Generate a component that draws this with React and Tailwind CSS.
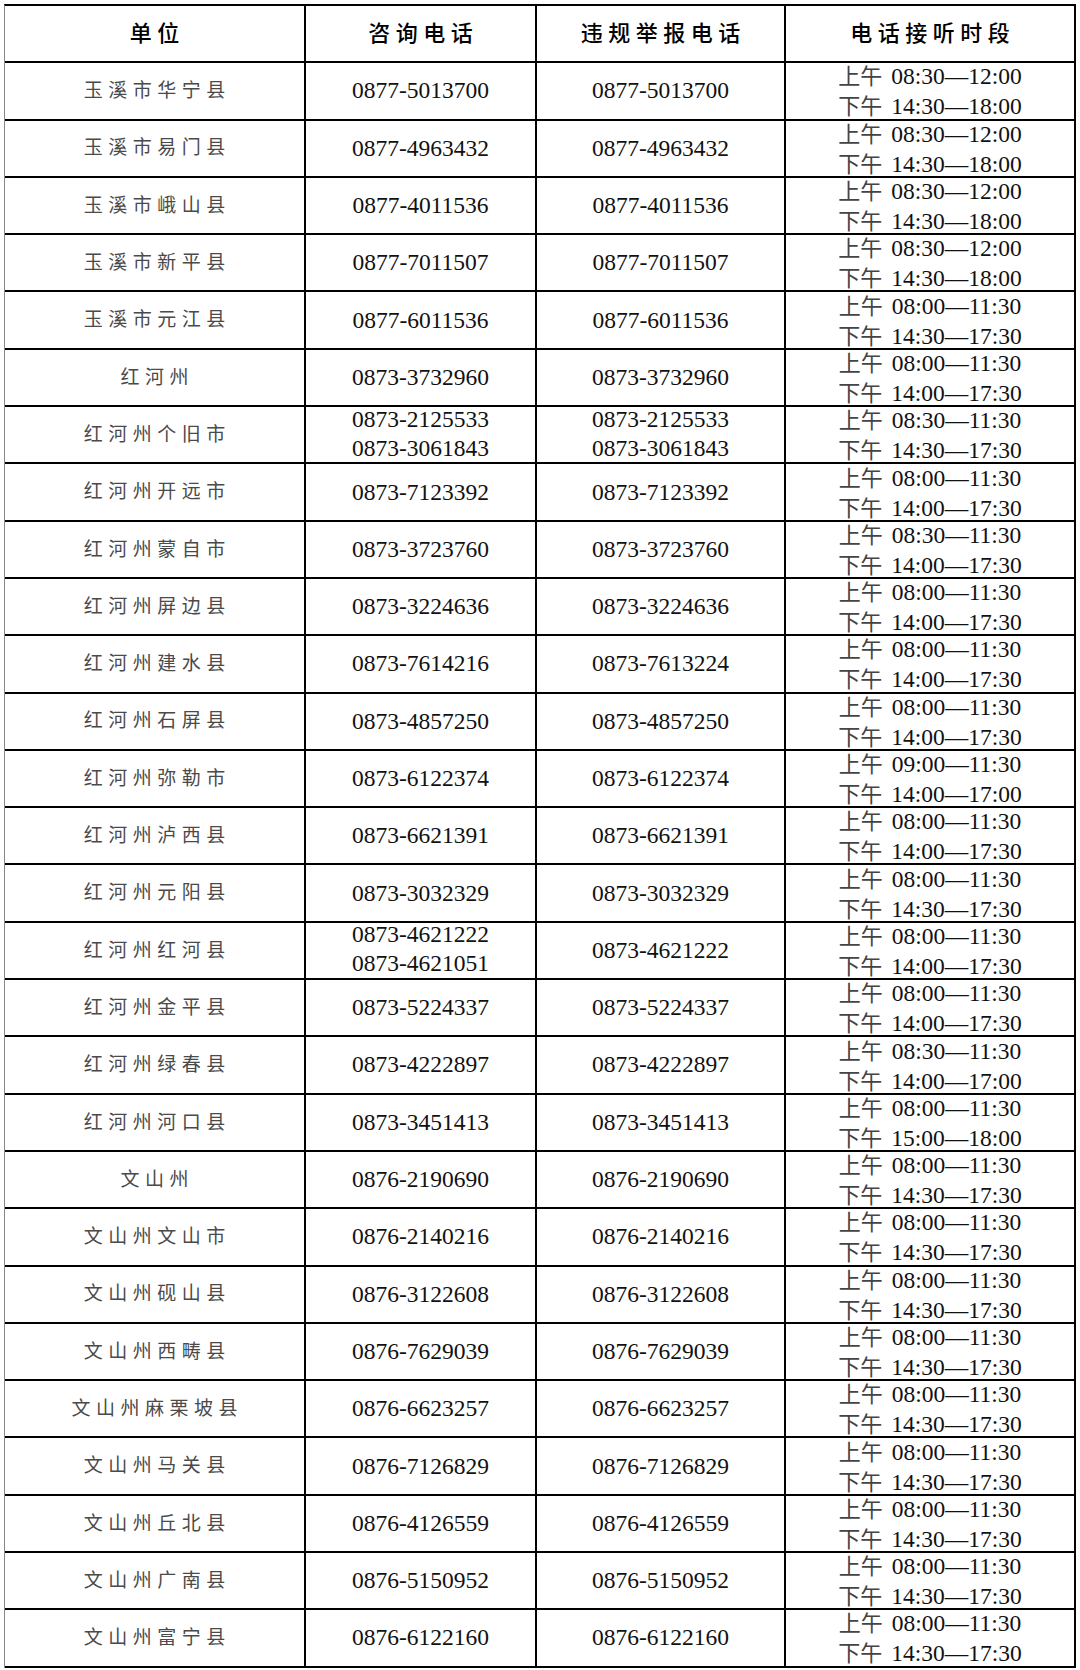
import React from "react";

const cjk = '"Noto Sans CJK SC", sans-serif';
const serif = '"Liberation Serif", "Noto Sans CJK SC", serif';

const wsTimes = ["08:00—11:30", "14:30—17:30"];

const rows = [
  ["玉溪市华宁县", ["0877-5013700"], ["0877-5013700"], ["08:30—12:00", "14:30—18:00"]],
  ["玉溪市易门县", ["0877-4963432"], ["0877-4963432"], ["08:30—12:00", "14:30—18:00"]],
  ["玉溪市峨山县", ["0877-4011536"], ["0877-4011536"], ["08:30—12:00", "14:30—18:00"]],
  ["玉溪市新平县", ["0877-7011507"], ["0877-7011507"], ["08:30—12:00", "14:30—18:00"]],
  ["玉溪市元江县", ["0877-6011536"], ["0877-6011536"], ["08:00—11:30", "14:30—17:30"]],
  ["红河州", ["0873-3732960"], ["0873-3732960"], ["08:00—11:30", "14:00—17:30"]],
  ["红河州个旧市", ["0873-2125533", "0873-3061843"], ["0873-2125533", "0873-3061843"], ["08:30—11:30", "14:30—17:30"]],
  ["红河州开远市", ["0873-7123392"], ["0873-7123392"], ["08:00—11:30", "14:00—17:30"]],
  ["红河州蒙自市", ["0873-3723760"], ["0873-3723760"], ["08:30—11:30", "14:00—17:30"]],
  ["红河州屏边县", ["0873-3224636"], ["0873-3224636"], ["08:00—11:30", "14:00—17:30"]],
  ["红河州建水县", ["0873-7614216"], ["0873-7613224"], ["08:00—11:30", "14:00—17:30"]],
  ["红河州石屏县", ["0873-4857250"], ["0873-4857250"], ["08:00—11:30", "14:00—17:30"]],
  ["红河州弥勒市", ["0873-6122374"], ["0873-6122374"], ["09:00—11:30", "14:00—17:00"]],
  ["红河州泸西县", ["0873-6621391"], ["0873-6621391"], ["08:00—11:30", "14:00—17:30"]],
  ["红河州元阳县", ["0873-3032329"], ["0873-3032329"], ["08:00—11:30", "14:30—17:30"]],
  ["红河州红河县", ["0873-4621222", "0873-4621051"], ["0873-4621222"], ["08:00—11:30", "14:00—17:30"]],
  ["红河州金平县", ["0873-5224337"], ["0873-5224337"], ["08:00—11:30", "14:00—17:30"]],
  ["红河州绿春县", ["0873-4222897"], ["0873-4222897"], ["08:30—11:30", "14:00—17:00"]],
  ["红河州河口县", ["0873-3451413"], ["0873-3451413"], ["08:00—11:30", "15:00—18:00"]],
  ["文山州", ["0876-2190690"], ["0876-2190690"], wsTimes],
  ["文山州文山市", ["0876-2140216"], ["0876-2140216"], wsTimes],
  ["文山州砚山县", ["0876-3122608"], ["0876-3122608"], wsTimes],
  ["文山州西畴县", ["0876-7629039"], ["0876-7629039"], wsTimes],
  ["文山州麻栗坡县", ["0876-6623257"], ["0876-6623257"], wsTimes],
  ["文山州马关县", ["0876-7126829"], ["0876-7126829"], wsTimes],
  ["文山州丘北县", ["0876-4126559"], ["0876-4126559"], wsTimes],
  ["文山州广南县", ["0876-5150952"], ["0876-5150952"], wsTimes],
  ["文山州富宁县", ["0876-6122160"], ["0876-6122160"], wsTimes],
];

const cell = "h-[57.3px] border-b-2 border-black flex flex-col items-center justify-center";
const divider = "border-r-2";

const Phones = ({ list }) => (
  <div className={`${cell} ${divider} ${list.length > 1 ? "pb-[2px]" : ""}`}>
    {list.map((p) => (
      <div
        key={p}
        className={`text-[23.5px] text-[#111] shrink-0 ${list.length > 1 ? "leading-[29px]" : "leading-[27px]"}`}
        style={{ fontFamily: serif }}
      >
        {p}
      </div>
    ))}
  </div>
);

// two lines that spill slightly past the cell edges, as in the scan
const Times = ({ list }) => (
  <div className={`${cell} pb-[3px]`}>
    {list.map((t, i) => (
      <div key={i} className="h-[30px] shrink-0 flex items-baseline leading-[30px] whitespace-nowrap">
        <span className="text-[22px] text-[#444] mr-[9px]" style={{ fontFamily: cjk }}>
          {i === 0 ? "上午" : "下午"}
        </span>
        <span className="text-[23.5px] text-[#111]" style={{ fontFamily: serif }}>
          {t}
        </span>
      </div>
    ))}
  </div>
);

const headers = ["单位", "咨询电话", "违规举报电话", "电话接听时段"];

export default function App() {
  return (
    <div className="w-[1080px] min-h-[1670px] bg-white pt-1 pl-1">
      <div className="w-[1072px] grid grid-cols-[301px_231px_249px_288px] border-t-2 border-r-2 border-black border-l border-l-[#888]">
        {headers.map((h, i) => (
          <div key={h} className={`${cell} ${i < 3 ? divider : ""} pb-[4px]`}>
            <span
              className="text-[22px] font-medium text-black tracking-[5.5px] pl-[5.5px]"
              style={{ fontFamily: cjk }}
            >
              {h}
            </span>
          </div>
        ))}
        {rows.map(([name, a, b, t]) => (
          <React.Fragment key={name}>
            <div className={`${cell} ${divider} pb-[3px]`}>
              <span
                className="text-[19px] text-[#4a4a4a] tracking-[5.5px] pl-[5.5px]"
                style={{ fontFamily: cjk }}
              >
                {name}
              </span>
            </div>
            <Phones list={a} />
            <Phones list={b} />
            <Times list={t} />
          </React.Fragment>
        ))}
      </div>
    </div>
  );
}
